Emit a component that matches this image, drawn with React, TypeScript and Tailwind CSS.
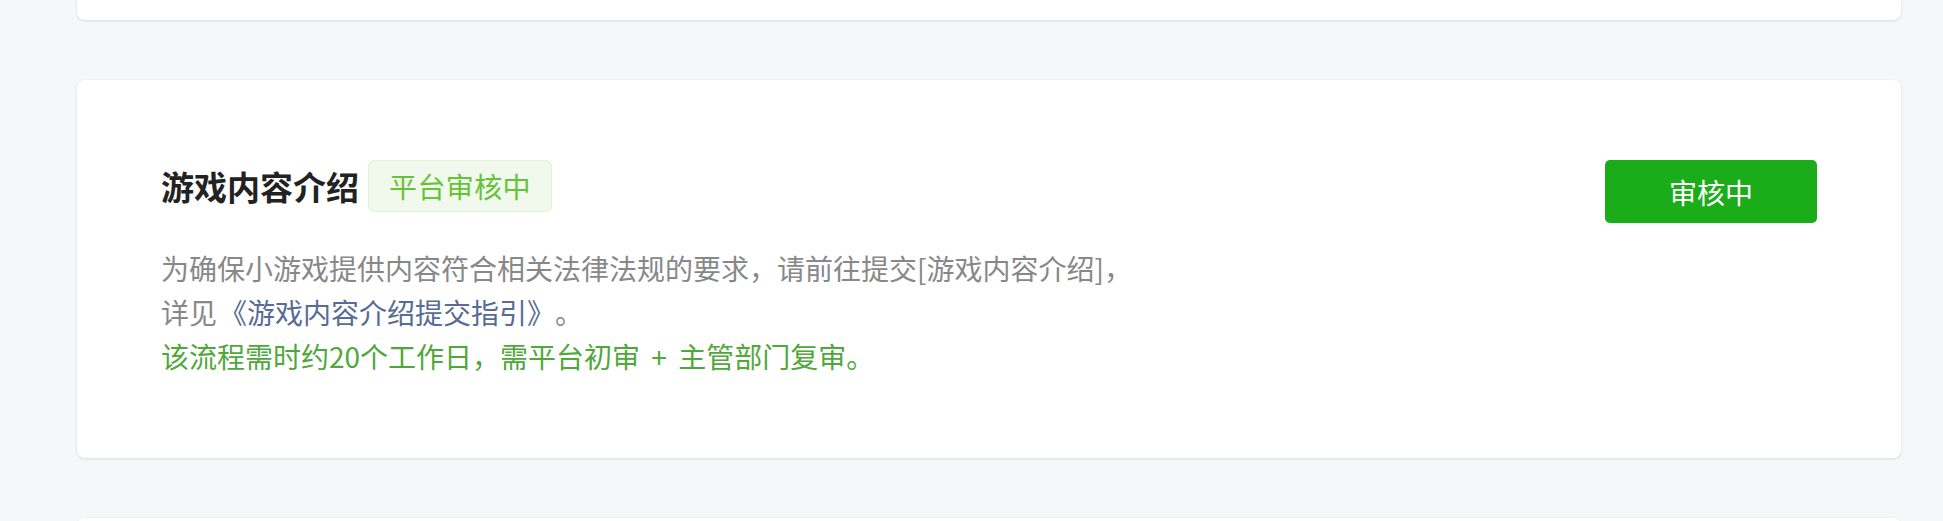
export default function App() {
  return (
    <div
      className="min-h-screen bg-[#f6f7f9] pl-[77px] pr-[42px] overflow-hidden [text-spacing-trim:space-all]"
      style={{ fontFamily: '"Noto Sans CJK SC", "Noto Sans", sans-serif' }}
    >
      <div className="flex flex-col gap-[60px]">
        {/* previous card, scrolled mostly out of view */}
        <div className="-mt-[200px] h-[220px] rounded-[8px] bg-white shadow-[0_1px_3px_rgba(0,0,0,0.12)]" />

        <div className="flex items-start justify-between rounded-[8px] bg-white px-[84px] py-[80px] shadow-[0_1px_3px_rgba(0,0,0,0.12)]">
          <div className="flex flex-col">
            <div className="flex items-center gap-[9px]">
              <h2 className="text-[33px] font-bold leading-[52px] text-[#222]">游戏内容介绍</h2>
              <span className="flex h-[52px] items-center rounded-[6px] border border-[#e1f3d8] bg-[#f0f9eb] px-[20px] text-[28px] tracking-[0.4px] text-[#67c23a]">
                平台审核中
              </span>
            </div>
            <div className="mt-[34px] text-[28px] leading-[44px] text-[#888]">
              <p>为确保小游戏提供内容符合相关法律法规的要求，请前往提交[游戏内容介绍]，</p>
              <p>
                详见<a className="ml-[2px] text-[#576b95]">《游戏内容介绍提交指引》</a>。
              </p>
              <p className="text-[#4ea83a]">
                该流程需时约20个工作日，需平台初审<span className="mx-[5px]"> + </span>主管部门复审。
              </p>
            </div>
          </div>
          <button
            type="button"
            className="h-[63px] w-[212px] rounded-[5px] bg-[#1aad19] text-[28px] text-white"
          >
            审核中
          </button>
        </div>

        <div className="h-[300px] rounded-[8px] bg-white shadow-[0_1px_3px_rgba(0,0,0,0.12)]" />
      </div>
    </div>
  );
}
